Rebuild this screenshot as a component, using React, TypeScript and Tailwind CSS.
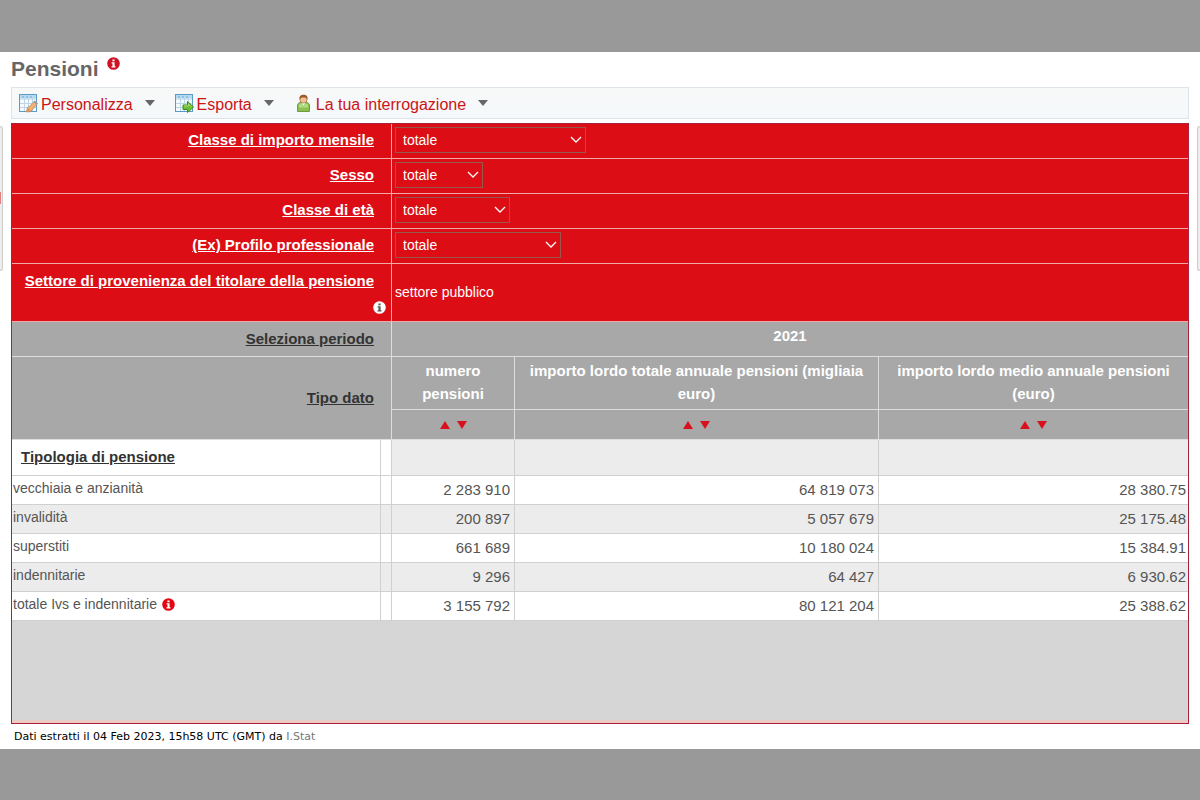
import { useState } from "react";

type Filter = {
  id: string;
  label: string;
  width: string;
};

const filters: Filter[] = [
  { id: "importo", label: "Classe di importo mensile", width: "w-[191px]" },
  { id: "sesso", label: "Sesso", width: "w-[88px]" },
  { id: "eta", label: "Classe di età", width: "w-[115px]" },
  { id: "profilo", label: "(Ex) Profilo professionale", width: "w-[166px]" },
];

const measures = [
  "numero pensioni",
  "importo lordo totale annuale pensioni (migliaia euro)",
  "importo lordo medio annuale pensioni (euro)",
];

const rows = [
  { label: "vecchiaia e anzianità", values: ["2 283 910", "64 819 073", "28 380.75"] },
  { label: "invalidità", values: ["200 897", "5 057 679", "25 175.48"] },
  { label: "superstiti", values: ["661 689", "10 180 024", "15 384.91"] },
  { label: "indennitarie", values: ["9 296", "64 427", "6 930.62"] },
  { label: "totale Ivs e indennitarie", values: ["3 155 792", "80 121 204", "25 388.62"], info: true },
];

const InfoIcon = ({ circle, mark }: { circle: string; mark: string }) => (
  <svg width="13" height="13" viewBox="0 0 13 13" className="block">
    <circle cx="6.5" cy="6.5" r="6.3" fill={circle} />
    <path d="M5.4 2.4h2.2v1.9H5.4zM4.6 5.2h3v4h.9v1.3h-4V9.2h1V6.5h-.9z" fill={mark} />
  </svg>
);

const Sheet = () => (
  <>
    <rect x="0.5" y="0.5" width="17" height="17" fill="#f4fafe" stroke="#5b9bc4" />
    <rect x="1" y="1" width="16" height="3.5" fill="#b5daf2" />
    <path d="M1 5h16M1 9.500h16M1 13.500h16M5.500 4v13M9.500 4v13M13.500 4v13" stroke="#bcd6e6" />
    <path d="M3 3h2M7 3h2M11 3h2" stroke="#6fa9cc" />
  </>
);

const CustomizeIcon = () => (
  <svg width="19" height="19" viewBox="0 0 19 19">
    <Sheet />
    <path d="M7.500 18l1-4.500 2.500-1.500 4.500-5 3 2.500-4.500 5.500-2.500 2.500z" fill="#f0b277" stroke="#b98a62" strokeWidth="0.800" />
    <path d="M7.500 18l1-4.500 3.500 3.500z" fill="#e8924a" />
    <path d="M14.500 8l3 2.500 1-1.500-2.500-2.300z" fill="#9a9fa6" />
  </svg>
);

const ExportIcon = () => (
  <svg width="19" height="19" viewBox="0 0 19 19">
    <Sheet />
    <path
      d="M8 11h4.500V7.500l6 5.500-6 5.500V15.500H8z"
      fill="#6cc02f"
      stroke="#3d8d22"
      strokeWidth="1"
      strokeLinejoin="round"
    />
    <path d="M9 12h4.500V10l3 2.800" fill="none" stroke="#a9e06f" />
  </svg>
);

const UserIcon = () => (
  <svg width="19" height="19" viewBox="0 0 19 19">
    <path d="M3.500 17.500V12c0-3 2-4 6-4s6 1 6 4v5.500z" fill="#8cc152" stroke="#6f9a45" />
    <path d="M5 12c0-1.500 1-2.500 2.500-2.500l2 3.500 2-3.500c1.500 0 2.500 1 2.500 2.500v1.500H5z" fill="#b4dc85" />
    <path d="M7.500 8.500l2 3.500 2-3.500z" fill="#fff" />
    <circle cx="9.500" cy="5.500" r="3.600" fill="#f0c296" stroke="#a97345" strokeWidth="0.800" />
    <path d="M5.500 5.500C5 2 7 .8 9.500.8s4.500 1.200 4 4.700c-1-1.800-2.500-2-4-2s-3 .2-4 2z" fill="#9c5a2c" />
  </svg>
);

const menus = [
  { label: "Personalizza", Icon: CustomizeIcon },
  { label: "Esporta", Icon: ExportIcon },
  { label: "La tua interrogazione", Icon: UserIcon },
];

const SortButtons = () => (
  <div className="flex items-center justify-center gap-[7px]">
    <button type="button" aria-label="Ordine crescente">
      <svg width="10" height="8" viewBox="0 0 10 8" className="block">
        <path d="M0 8L5 0l5 8z" fill="#d8121c" />
      </svg>
    </button>
    <button type="button" aria-label="Ordine decrescente">
      <svg width="10" height="8" viewBox="0 0 10 8" className="block">
        <path d="M0 0h10L5 8z" fill="#d8121c" />
      </svg>
    </button>
  </div>
);

const FilterSelect = ({ filter }: { filter: Filter }) => {
  const [value, setValue] = useState("totale");

  return (
    <div className={`relative ${filter.width}`}>
      <select
        id={filter.id}
        value={value}
        onChange={(e) => setValue(e.target.value)}
        className="block h-[26px] w-full appearance-none border border-[#96584a] bg-transparent pl-[7px] text-[14px] text-white"
      >
        <option>totale</option>
      </select>
      <svg
        width="12"
        height="7"
        viewBox="0 0 12 7"
        className="pointer-events-none absolute top-[9px] right-1"
      >
        <path d="M1 1l5 5 5-5" fill="none" stroke="#fff" strokeWidth="1.300" />
      </svg>
    </div>
  );
};

const App = () => {
  return (
    <div className="min-h-screen bg-[#999999] py-[52px] font-['Liberation_Sans',Arial,sans-serif]">
      <main className="relative bg-white px-[11px] pb-[3px]">
        {/* edges of the collapsed side panels */}
        <div className="absolute top-[74px] left-0 h-[145px] w-[3px] rounded-r-sm border-y border-r border-[#cccccc] bg-[#eeeeee]" />
        <div className="absolute top-[140px] left-0 h-[12px] w-px bg-[#e08080]" />
        <div className="absolute top-[74px] right-0 h-[145px] w-[3px] rounded-l-sm border-y border-l border-[#cccccc] bg-[#eeeeee]" />

        <header className="flex h-[35px] items-start gap-2">
          <h1 className="text-[21px] leading-[34px] font-bold text-[#666666]">Pensioni</h1>
          <div className="pt-[5px]">
            <InfoIcon circle="#cf1126" mark="#ffffff" />
          </div>
        </header>

        <nav className="flex h-[32px] items-center gap-5 border border-[#dde3e8] bg-linear-to-b from-[#f8f8f8] to-[#f5f9fb] px-[7px]">
          {menus.map(({ label, Icon }) => (
            <button key={label} type="button" className="flex items-center text-[16px] text-[#cc1417]">
              <Icon />
              <span className="pt-1 pl-[3px]">{label}</span>
              <svg width="10" height="6" viewBox="0 0 10 6" className="ml-3">
                <path d="M0 0h10L5 6z" fill="#666666" />
              </svg>
            </button>
          ))}
        </nav>

        <section className="mt-1 border border-[#a8203a] bg-[#d6d6d6] pb-[102px] shadow-[inset_0_-3px_0_#eccac6]">
          <table className="w-full table-fixed border-separate border-spacing-0 text-[15px]">
            <colgroup>
              <col className="w-[369px]" />
              <col className="w-[11px]" />
              <col className="w-[123px]" />
              <col className="w-[364px]" />
              <col />
            </colgroup>
            <thead className="text-white">
              {filters.map((filter) => (
                <tr key={filter.id} className="h-[35px] bg-[#dc0d15]">
                  <th colSpan={2} className="border-r border-b border-[#f3a9a6] p-0 pr-[17px] pb-[2px] text-right">
                    <label htmlFor={filter.id} className="underline">
                      {filter.label}
                    </label>
                  </th>
                  <td colSpan={3} className="border-b border-[#f3a9a6] p-0 pb-[2px] pl-[3px]">
                    <FilterSelect filter={filter} />
                  </td>
                </tr>
              ))}
              <tr className="h-[58px] bg-[#dc0d15]">
                <th colSpan={2} className="border-r border-b border-[#f3a9a6] p-0 pt-[2px] text-right align-top">
                  <a href="#settore" className="block pr-[17px] leading-[29px] underline">
                    Settore di provenienza del titolare della pensione
                  </a>
                  <div className="flex justify-end pt-[6px] pr-[5px]">
                    <InfoIcon circle="#ffffff" mark="#555555" />
                  </div>
                </th>
                <td colSpan={3} className="border-b border-[#f3a9a6] p-0 pl-[3px] text-[14px]">
                  settore pubblico
                </td>
              </tr>
              <tr className="h-[35px] bg-[#a8a8a8]">
                <th colSpan={2} className="border-r border-b border-[#dddddd] p-0 pr-[17px] text-right text-[#333333]">
                  <a href="#periodo" className="underline">
                    Seleziona periodo
                  </a>
                </th>
                <th colSpan={3} className="border-b border-[#dddddd] p-0 pb-[5px] text-center">
                  2021
                </th>
              </tr>
              <tr className="h-[53px] bg-[#a8a8a8]">
                <th
                  colSpan={2}
                  rowSpan={2}
                  className="border-r border-b border-[#dddddd] p-0 pr-[17px] text-right text-[#333333]"
                >
                  <a href="#tipo" className="underline">
                    Tipo dato
                  </a>
                </th>
                {measures.map((measure) => (
                  <th
                    key={measure}
                    className="border-r border-b border-[#dddddd] p-0 px-2 pb-[2px] text-center leading-[23px] last:border-r-0"
                  >
                    {measure}
                  </th>
                ))}
              </tr>
              <tr className="h-[30px] bg-[#a8a8a8]">
                {measures.map((measure) => (
                  <td key={measure} className="border-r border-b border-[#dddddd] p-0 last:border-r-0">
                    <SortButtons />
                  </td>
                ))}
              </tr>
            </thead>
            <tbody className="text-[#555555]">
              <tr className="h-[36px] bg-white">
                <th className="border-r border-b border-[#d0d0d0] p-0 pl-[9px] text-left text-[#333333]">
                  <a href="#tipologia" className="underline">
                    Tipologia di pensione
                  </a>
                </th>
                <td className="border-r border-b border-[#d0d0d0] p-0" />
                {measures.map((measure) => (
                  <td
                    key={measure}
                    className="border-r border-b border-[#d0d0d0] bg-[#ececec] p-0 last:border-r-0"
                  />
                ))}
              </tr>
              {rows.map((row) => (
                <tr key={row.label} className="h-[29px] even:bg-white odd:bg-[#ececec]">
                  <th className="border-r border-b border-[#d0d0d0] p-0 pt-[2px] pl-px text-left align-top text-[14px] font-normal">
                    <div className="flex items-center gap-[5px]">
                      {row.label}
                      {row.info && <InfoIcon circle="#e30613" mark="#ffffff" />}
                    </div>
                  </th>
                  <td className="border-r border-b border-[#d0d0d0] p-0" />
                  {row.values.map((value) => (
                    <td
                      key={value}
                      className="border-r border-b border-[#d0d0d0] p-0 pr-1 text-right last:border-r-0 last:pr-[2px]"
                    >
                      {value}
                    </td>
                  ))}
                </tr>
              ))}
            </tbody>
          </table>
        </section>

        <footer className="pt-1 pl-[3px] font-['DejaVu_Sans',Verdana,sans-serif] text-[11px] leading-[18px] text-black">
          Dati estratti il 04 Feb 2023, 15h58 UTC (GMT) da{" "}
          <a href="#istat" className="text-[#777777]">
            I.Stat
          </a>
        </footer>
      </main>
    </div>
  );
};

export default App;
